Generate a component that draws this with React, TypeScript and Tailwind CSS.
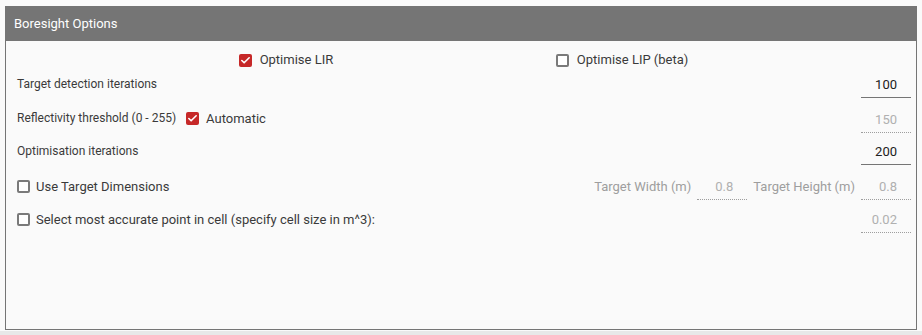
import { Check } from 'lucide-react';

function Checkbox({ checked }: { checked?: boolean }) {
  if (checked)
    return (
      <span className="flex h-[13px] w-[13px] items-center justify-center rounded-[2px] bg-[#c62828]">
        <Check className="h-[11px] w-[11px] text-white" strokeWidth={3.5} />
      </span>
    );
  return <span className="h-[13px] w-[13px] rounded-[2px] border-2 border-[#7a7a7a] bg-white" />;
}

function NumberField({ value, disabled }: { value: string; disabled?: boolean }) {
  return (
    <div
      className={
        disabled
          ? 'w-[50px] border-b border-dotted border-[#9e9e9e] pr-[14px] pb-[3px] text-right text-[13px] text-[#b0b0b0]'
          : 'w-[50px] border-b border-[#757575] pr-[14px] pb-[3px] text-right text-[13px] text-[#212121]'
      }
    >
      {value}
    </div>
  );
}

export default function App() {
  return (
    <div className="h-[335px] w-[922px] bg-[#fafafa] pt-[6px] font-['Roboto',sans-serif] text-[#3a3a3a]">
      <div className="mx-[5px] flex h-[324px] flex-col border border-[#757575] bg-[#fafafa]">
        <div className="flex h-[34px] items-center bg-[#757575] px-[8px] text-[13px] text-white">
          Boresight Options
        </div>
        <div className="flex flex-col pr-[5px] pl-[11px] pt-[9px]">
          <div className="-ml-[1px] flex h-[20px] items-center justify-evenly text-[13px]">
            <label className="flex items-center gap-[8px]">
              <Checkbox checked />
              <span>Optimise LIR</span>
            </label>
            <label className="flex items-center gap-[8px]">
              <Checkbox />
              <span>Optimise LIP (beta)</span>
            </label>
          </div>
          <div className="mt-[4px] flex h-[24px] items-end justify-between">
            <span className="pb-[5px] text-[12px]">Target detection iterations</span>
            <NumberField value="100" />
          </div>
          <div className="mt-[11px] flex h-[24px] items-end justify-between">
            <div className="flex items-center gap-[10px] pb-[5px]">
              <span className="text-[12px]">Reflectivity threshold (0 - 255)</span>
              <label className="flex items-center gap-[7px] text-[13px]">
                <Checkbox checked />
                <span>Automatic</span>
              </label>
            </div>
            <NumberField value="150" disabled />
          </div>
          <div className="mt-[8px] flex h-[24px] items-end justify-between">
            <span className="pb-[5px] text-[12px]">Optimisation iterations</span>
            <NumberField value="200" />
          </div>
          <div className="mt-[11px] flex h-[24px] items-end justify-between">
            <label className="flex items-center gap-[6px] pb-[4px] text-[13px]">
              <Checkbox />
              <span>Use Target Dimensions</span>
            </label>
            <div className="flex items-end gap-[6px] text-[13px] text-[#9e9e9e]">
              <span className="pb-[4px]">Target Width (m)</span>
              <NumberField value="0.8" disabled />
              <span className="pb-[4px]">Target Height (m)</span>
              <NumberField value="0.8" disabled />
            </div>
          </div>
          <div className="mt-[9px] flex h-[24px] items-end justify-between">
            <label className="flex items-center gap-[6px] pb-[4px] text-[13px]">
              <Checkbox />
              <span>Select most accurate point in cell (specify cell size in m^3):</span>
            </label>
            <NumberField value="0.02" disabled />
          </div>
        </div>
      </div>
      <div className="mt-[1px] h-[4px] bg-[#e8e8e8]" />
    </div>
  );
}
